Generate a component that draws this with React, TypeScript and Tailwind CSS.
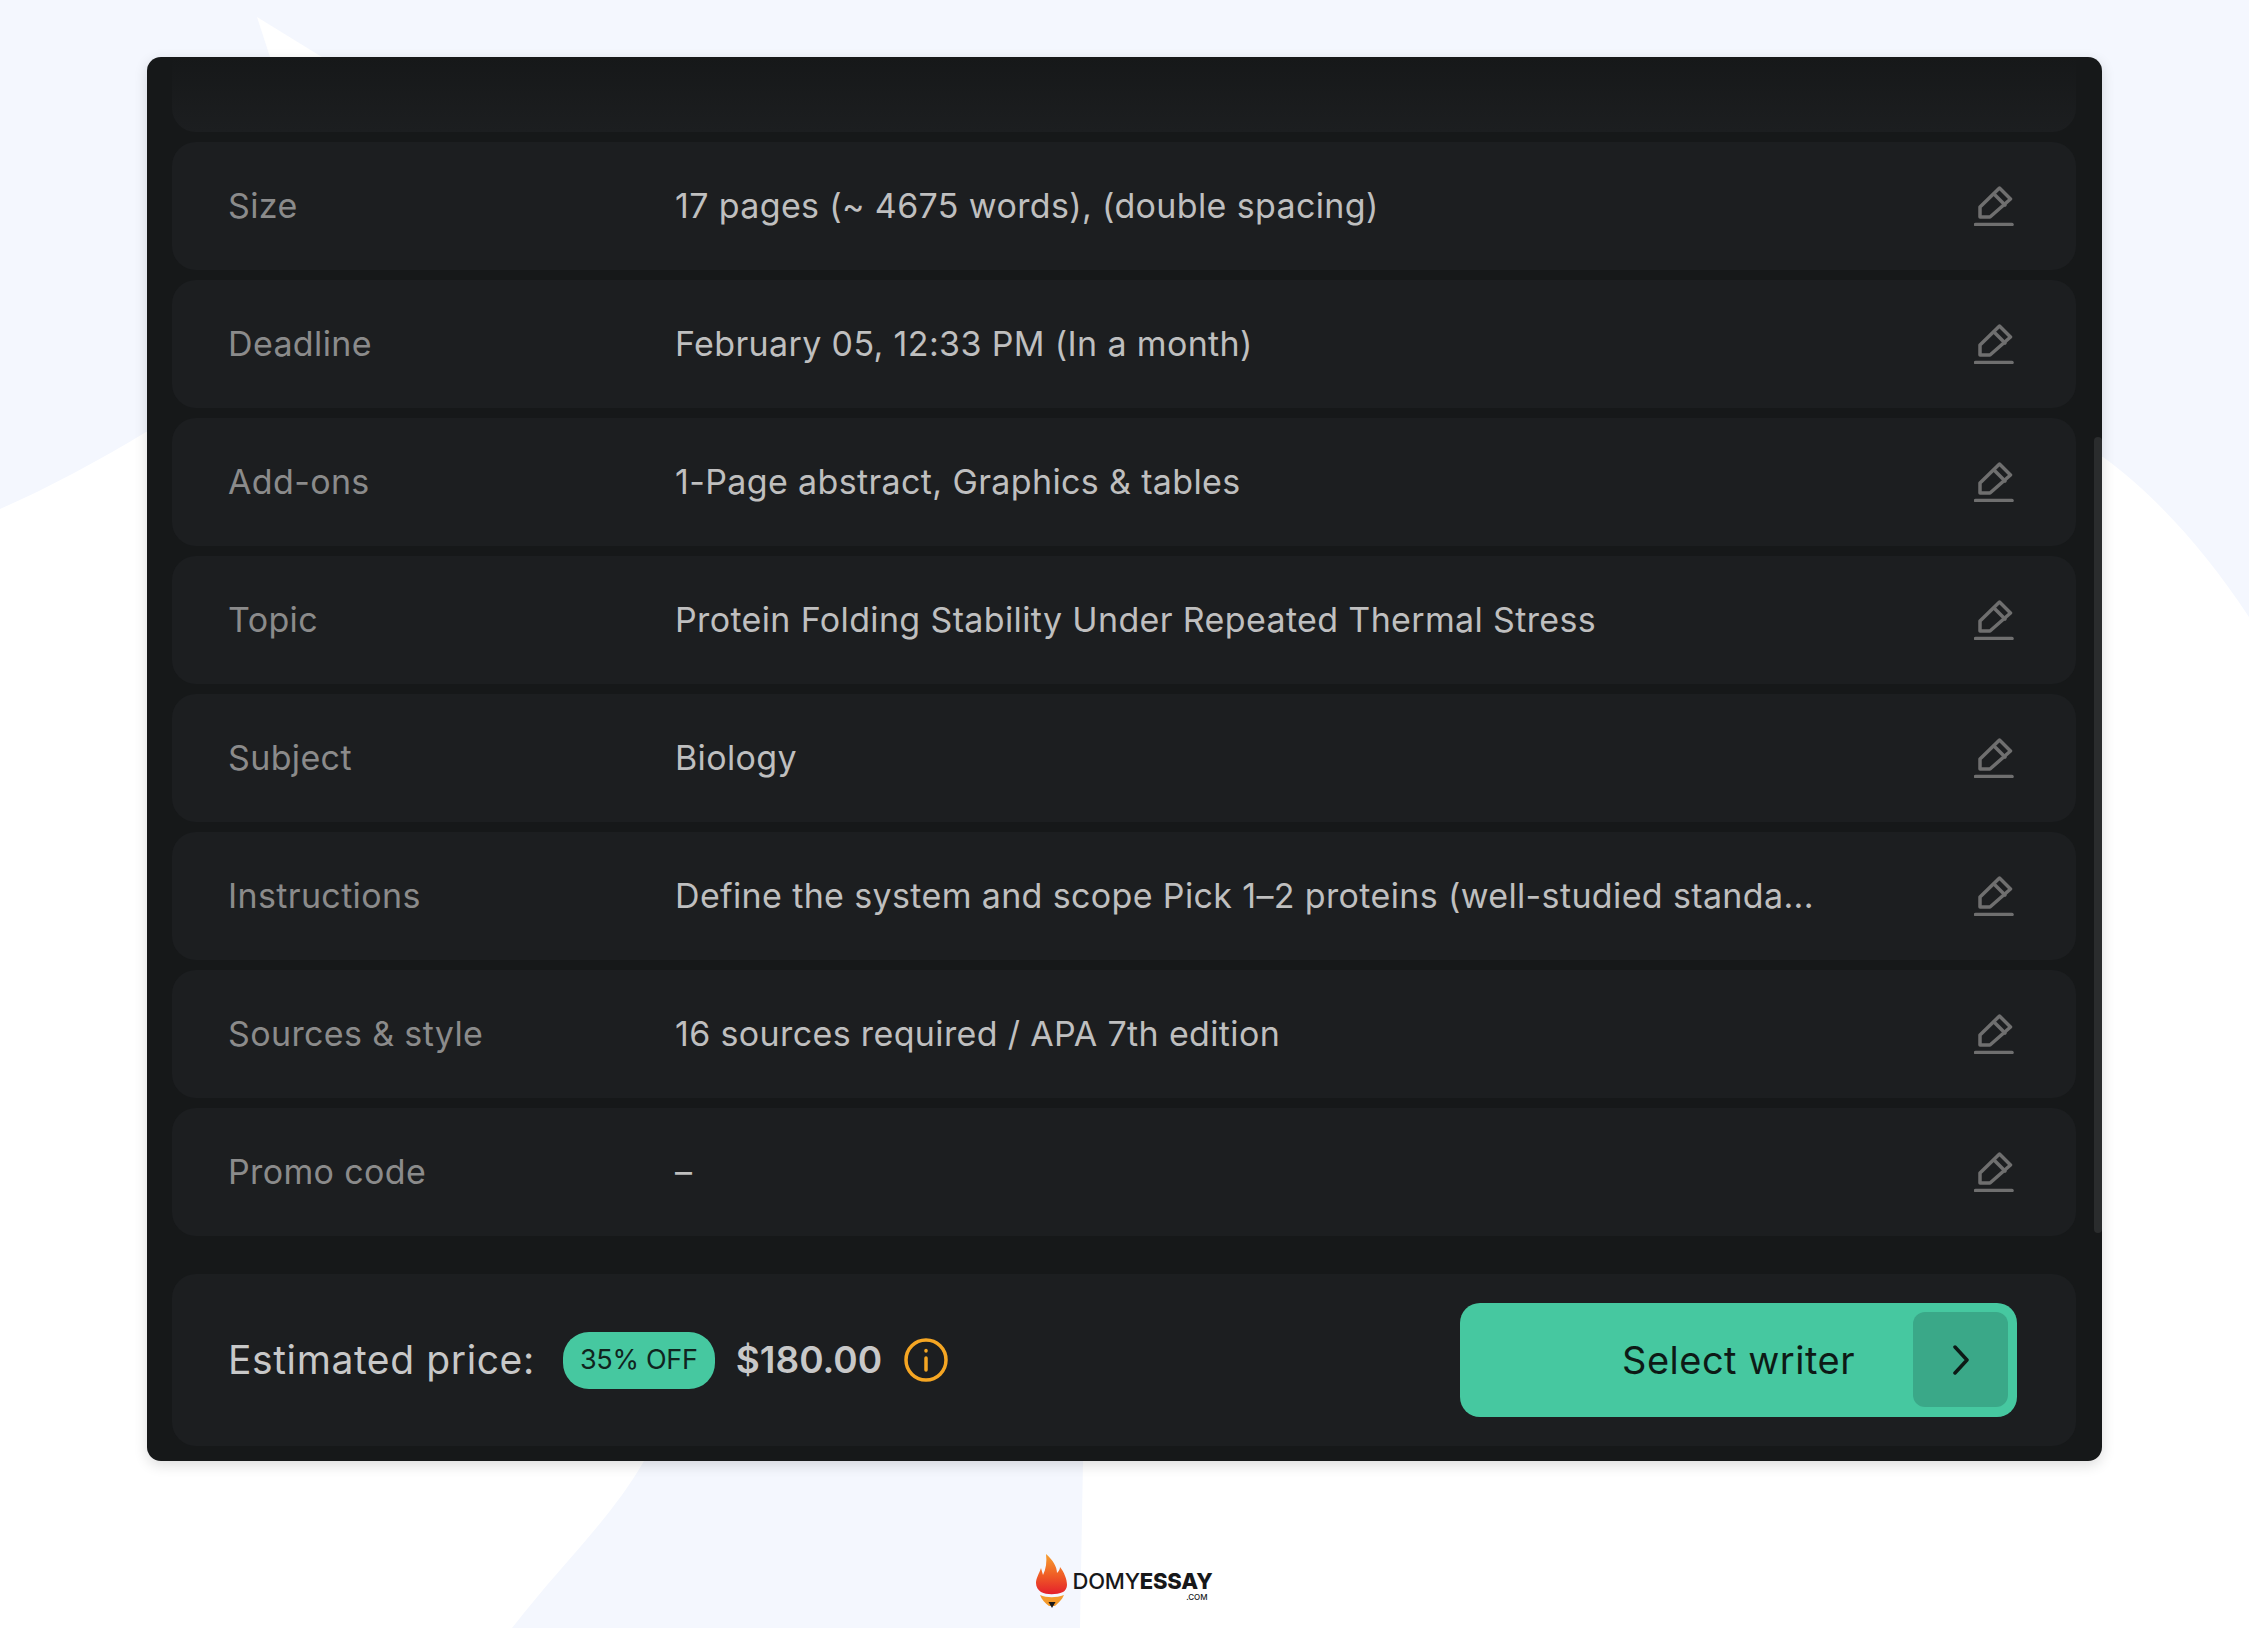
const rows = [
  { label: "Size", value: "17 pages (~ 4675 words), (double spacing)" },
  { label: "Deadline", value: "February 05, 12:33 PM (In a month)" },
  { label: "Add-ons", value: "1-Page abstract, Graphics & tables" },
  { label: "Topic", value: "Protein Folding Stability Under Repeated Thermal Stress" },
  { label: "Subject", value: "Biology" },
  { label: "Instructions", value: "Define the system and scope Pick 1–2 proteins (well-studied standa..." },
  { label: "Sources & style", value: "16 sources required / APA 7th edition" },
  { label: "Promo code", value: "–" },
];

const EditIcon = () => (
  <svg width="40" height="40" viewBox="0 0 40 40" fill="none" stroke="#6f6f6f" strokeWidth="3.500" strokeLinejoin="round" strokeLinecap="round">
    <path d="M6 21 25.500 2 36.500 13 16 31H6Z" />
    <path d="M20 8 31 19" />
    <path d="M1.500 38.500H38" />
  </svg>
);

const Background = () => (
  <svg className="absolute inset-0" width="2249" height="1628" viewBox="0 0 2249 1628">
    <path d="M0 0H2249V617C2205 550 2155 495 2103 457L146 432C100 460 50 487 0 509Z" fill="#f4f7fe" />
    <path d="M257 17 270 57H322Z" fill="#ffffff" />
    <path d="M644 1461C610 1520 565 1560 512 1628H1080L1083 1461Z" fill="#f4f7fe" />
  </svg>
);

const Logo = () => (
  <div className="flex items-start">
    <svg width="32" height="54" viewBox="0 0 32 54">
      <defs>
        <linearGradient id="flame" x1="0" y1="0" x2="0" y2="1">
          <stop offset="0" stopColor="#f6a030" />
          <stop offset="0.55" stopColor="#ef5a26" />
          <stop offset="1" stopColor="#e4202c" />
        </linearGradient>
      </defs>
      <path d="M10 0C17 6 21 13 21 19 23 17 24 15 24 13 28 18 31 25 31 31 31 34 29 37 27 38 20 41 11 41 5 38 2 36 0 33 0 29 0 24 3 20 5 14L7 21C10 15 11 8 10 0Z" fill="url(#flame)" />
      <path d="M4 41C11 44 20 44 28 41 26 46 22 49 19 52H13C9 49 6 46 4 41Z" fill="#f39a2c" />
      <path d="M12.500 48H19.500L16 54Z" fill="#1a1a1a" />
    </svg>
    <div className="ml-[4px] mt-[16px] flex flex-col items-end font-['Inter',sans-serif] text-[#17181a]">
      <div className="text-[22px] leading-[22px] tracking-[-0.2px] font-medium">
        DOMY<span className="font-extrabold">ESSAY</span>
      </div>
      <div className="text-[8px] leading-[10px] mr-[5px] font-medium">.COM</div>
    </div>
  </div>
);

export default function App() {
  return (
    <div className="relative h-[1628px] overflow-hidden bg-white font-['Inter',sans-serif]">
      <Background />
      <div className="relative flex flex-col items-center pt-[57px]">
        <div className="relative w-[1955px] rounded-[14px] bg-[#161819] pl-[25px] pr-[26px] pb-[15px] shadow-[0_4px_14px_rgba(0,0,0,0.14)]">
          <div className="h-[75px] rounded-b-[24px] bg-gradient-to-b from-[#161819] to-[#1c1e20]" />
          <div className="mt-[10px] flex flex-col gap-[10px]">
            {rows.map((row) => (
              <div key={row.label} className="flex h-[128px] items-center rounded-[24px] bg-[#1c1e20] pl-[56px] pr-[62px] text-[34px] tracking-[0.36px]">
                <div className="w-[447px] pb-[2px] text-[#8b8b8b]">{row.label}</div>
                <div className="flex-1 pb-[2px] text-[#bfbfbf]">{row.value}</div>
                <EditIcon />
              </div>
            ))}
          </div>
          <div className="mt-[38px] flex h-[172px] items-center rounded-[24px] bg-[#1c1e20] pl-[56px] pr-[59px]">
            <div className="text-[39px] tracking-[0.6px] text-[#c8c8c8]">Estimated price:</div>
            <div className="ml-[28px] flex h-[57px] w-[152px] items-center justify-center rounded-[26px] bg-[#46c8a0] text-[27px] tracking-[-0.3px] text-[#10241e]">35% OFF</div>
            <div className="ml-[21px] text-[37px] font-semibold text-[#c8c8c8]">$180.00</div>
            <svg className="ml-[22px]" width="44" height="44" viewBox="0 0 44 44" fill="none" stroke="#f5a623" strokeWidth="3.500" strokeLinecap="round">
              <circle cx="22" cy="22" r="20" />
              <path d="M22 20V32" />
              <path d="M22 12.500V13" />
            </svg>
            <div className="relative ml-auto flex h-[114px] w-[557px] items-center justify-center rounded-[20px] bg-[#46c8a0] text-[38px] tracking-[0.5px] text-[#0d1a16]">
              Select writer
              <div className="absolute right-[9px] top-[9px] flex h-[95px] w-[95px] items-center justify-center rounded-[12px] bg-[#3aa888]">
                <svg width="20" height="30" viewBox="0 0 20 30" fill="none" stroke="#0d1a16" strokeWidth="3.500" strokeLinecap="round" strokeLinejoin="round">
                  <path d="M4 2 16 15 4 28" />
                </svg>
              </div>
            </div>
          </div>
          <div className="absolute right-0 top-[380px] h-[796px] w-[8px] rounded-full bg-[#2a2c2d]" />
        </div>
        <div className="mt-[93px]">
          <Logo />
        </div>
      </div>
    </div>
  );
}
